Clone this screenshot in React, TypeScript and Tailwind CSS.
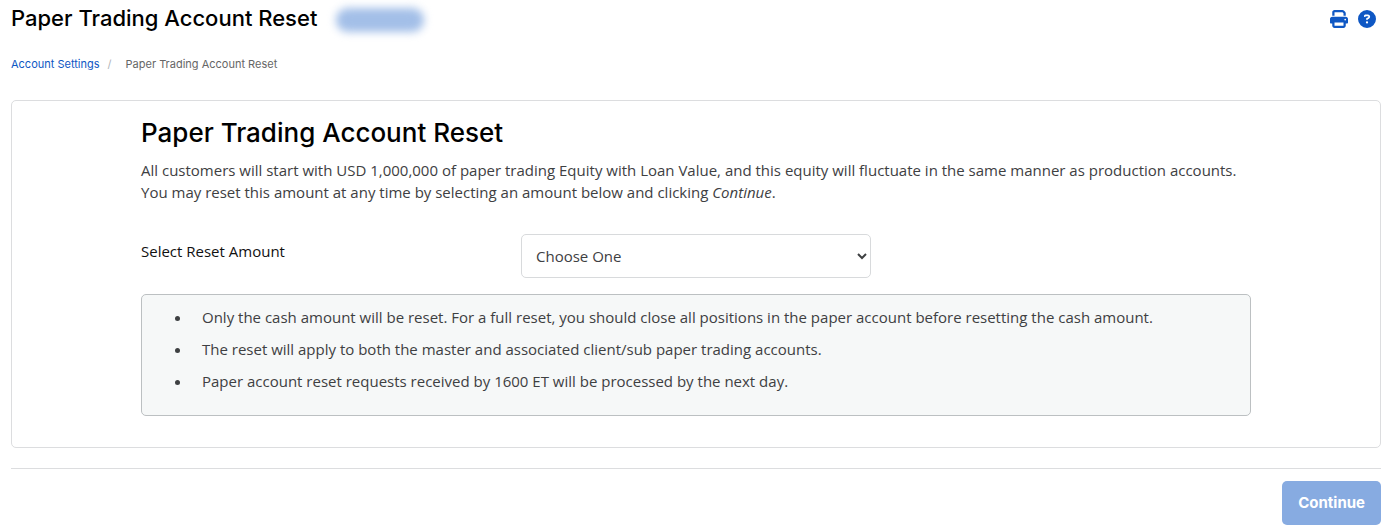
import { FaCircleQuestion, FaPrint } from "react-icons/fa6";

const notes = [
  "Only the cash amount will be reset. For a full reset, you should close all positions in the paper account before resetting the cash amount.",
  "The reset will apply to both the master and associated client/sub paper trading accounts.",
  "Paper account reset requests received by 1600 ET will be processed by the next day.",
];

function PageHeader() {
  return (
    <header className="flex h-10 items-center justify-between pr-[5px]">
      <div className="flex items-center gap-[19px]">
        <h1 className="pb-1 font-[Inter,sans-serif] text-[22px] leading-8 font-medium text-black">
          Paper Trading Account Reset
        </h1>
        <span
          aria-hidden="true"
          className="h-6 w-[88px] rounded-full bg-[#a3bfe8] blur-xs"
        />
      </div>
      <div className="flex items-center gap-2.5 pb-0.5 text-lg text-[#0e57c4]">
        <button type="button" aria-label="Print">
          <FaPrint />
        </button>
        <button type="button" aria-label="Help">
          <FaCircleQuestion />
        </button>
      </div>
    </header>
  );
}

function Breadcrumb() {
  return (
    <nav
      aria-label="Breadcrumb"
      className="mt-3 flex h-6 items-center font-[Inter,sans-serif] text-[11px]"
    >
      <a href="#settings" className="text-[#0e57c4]">
        Account Settings
      </a>
      <span className="mr-3.5 ml-2 text-[#b0b4b8]">/</span>
      <span className="text-[#666]">Paper Trading Account Reset</span>
    </nav>
  );
}

function ResetCard() {
  return (
    <section className="mt-6 rounded-[5px] border border-[#dcdddf] px-4 pt-4 pb-[31px]">
      <div className="mx-auto max-w-[1110px]">
        <h2 className="font-[Inter,sans-serif] text-[26px] leading-8 font-medium text-black">
          Paper Trading Account Reset
        </h2>
        <p className="mt-2.5 leading-[22px]">
          All customers will start with USD 1,000,000 of paper trading Equity
          with Loan Value, and this equity will fluctuate in the same manner as
          production accounts. You may reset this amount at any time by
          selecting an amount below and clicking <em>Continue</em>.
        </p>
        <div className="mt-[31px] flex flex-wrap items-start">
          <label
            htmlFor="amount"
            className="w-[380px] pt-1.5 leading-[22px] text-[#111]"
          >
            Select Reset Amount
          </label>
          <select
            id="amount"
            className="h-11 w-[350px] rounded-[5px] border border-[#d8dadc] bg-white px-2.5"
          >
            <option>Choose One</option>
          </select>
        </div>
        <ul className="mt-4 list-disc space-y-2.5 rounded-[5px] border border-[#bcc0c2] bg-[#f6f8f8] pt-[11px] pr-4 pb-[23px] pl-[50px]">
          {notes.map((note) => (
            <li key={note} className="pl-2.5 leading-[22px]">
              {note}
            </li>
          ))}
        </ul>
      </div>
    </section>
  );
}

export default function App() {
  return (
    <main className="bg-white pr-1 pl-[11px] font-['Open_Sans',sans-serif] text-[15px] text-[#3e4042]">
      <PageHeader />
      <Breadcrumb />
      <ResetCard />
      <footer className="mt-5 flex justify-end border-t border-[#dcdddf] pt-3 pb-1">
        <button
          type="button"
          disabled
          className="h-11 rounded-[5px] bg-[#87abe1] px-4 font-[Inter,sans-serif] text-[15px] font-bold text-white"
        >
          Continue
        </button>
      </footer>
    </main>
  );
}
